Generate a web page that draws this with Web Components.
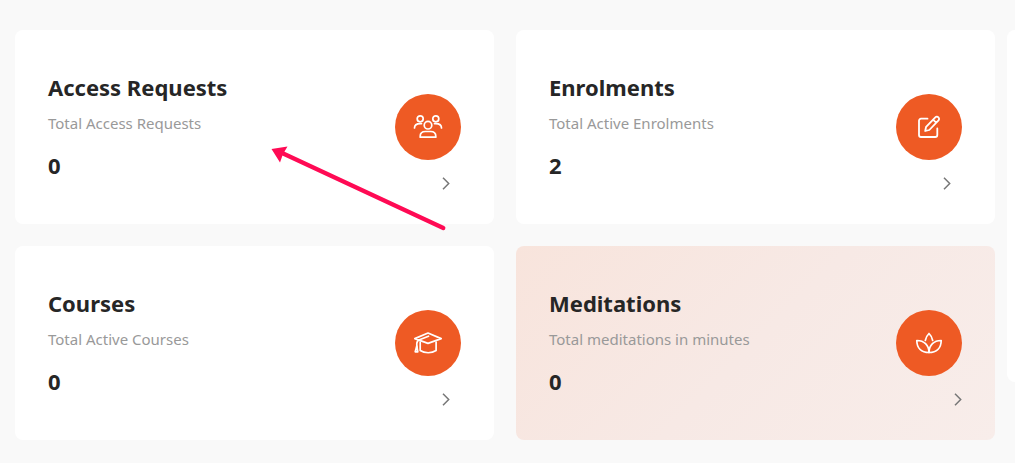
<!DOCTYPE html>
<html lang="en">
<head>
<meta charset="utf-8">
<title>Dashboard</title>
<style>
body { margin: 0; background: #f9f9f9; font-family: "Noto Sans", "Open Sans", sans-serif; }
</style>
</head>
<body>
<dash-board>
  <stat-card heading="Access Requests" caption="Total Access Requests" value="0">
    <svg slot="icon" width="30" height="26" viewBox="0 0 30 26" fill="none" stroke="#fff" stroke-width="1.7" stroke-linecap="round" stroke-linejoin="round">
      <circle cx="7.2" cy="4.8" r="3"/><circle cx="22.8" cy="4.8" r="3"/>
      <path d="M1.5 14c0-3 2.2-4.4 5.700-4.400h1.300M28.500 14c0-3-2.200-4.400-5.700-4.400h-1.300"/>
      <circle cx="15" cy="11.200" r="3.800"/>
      <path d="M7.200 23.200v-1c0-3 2.300-4.700 5.200-4.700h5.200c2.900 0 5.200 1.700 5.200 4.700v1z"/>
    </svg>
  </stat-card>
  <stat-card heading="Enrolments" caption="Total Active Enrolments" value="2">
    <svg slot="icon" width="24" height="24" viewBox="0 0 24 24" fill="none" stroke="#fff" stroke-width="1.8" stroke-linecap="round" stroke-linejoin="round">
      <path d="M10.500 3.700H4a2 2 0 0 0-2 2V20a2 2 0 0 0 2 2h14.300a2 2 0 0 0 2-2v-6.500"/>
      <path d="M8.200 16l.9-4.200L18.300 2.400a2.100 2.100 0 0 1 3.200 3L12.300 15zM16 4.700l3.200 3"/>
    </svg>
  </stat-card>
  <stat-card heading="Courses" caption="Total Active Courses" value="0">
    <svg slot="icon" width="30" height="24" viewBox="0 0 30 24" fill="none" stroke="#fff" stroke-width="1.700" stroke-linecap="round" stroke-linejoin="round">
      <path d="M15 2L1.800 7.600 15 12.400l13.200-4.800z"/>
      <path d="M15.500 5.200L6.500 8.800c-2 .8-2.700 2-2.700 4v4"/>
      <path d="M3.800 15l-1.600 5.800h2.600z"/>
      <path d="M7.200 11v8.500c4.500 3 11.500 3 15.900 0V11"/>
    </svg>
  </stat-card>
  <stat-card class="tinted" heading="Meditations" caption="Total meditations in minutes" value="0">
    <svg slot="icon" width="28" height="22" viewBox="0 0 28 22" fill="none" stroke="#fff" stroke-width="1.700" stroke-linecap="round" stroke-linejoin="round">
      <path d="M10.300 8.500C10.800 5.700 12.200 3.200 14 1.500c1.800 1.700 3.200 4.200 3.700 7"/>
      <path d="M14 20.500C13.900 13 9 8.400 1.800 8.500c0 7.500 4.700 12 12.200 12z"/>
      <path d="M14 20.500c.1-7.500 5-12.100 12.200-12 0 7.500-4.700 12-12.200 12z"/>
    </svg>
  </stat-card>
</dash-board>
<pointer-arrow></pointer-arrow>

<template id="board">
  <style>
    :host { display: flex; align-items: flex-start; gap: 12px; padding: 30px 0 22px 15px; }
    main { flex: 1; min-width: 0; display: grid; grid-template-columns: repeat(2, minmax(0, 1fr)); gap: 22px; }
    aside { flex: 0 0 8px; min-height: 352px; background: #fff; border-radius: 8px 0 0 8px; }
  </style>
  <main><slot></slot></main>
  <aside></aside>
</template>

<template id="card">
  <style>
    :host { display: flex; justify-content: space-between; box-sizing: border-box; min-height: 194px; padding: 0 33px; background: #fff; border-radius: 8px; color: #262626; }
    :host(.tinted) { background: linear-gradient(135deg, #f8e4dc, #f7e9e5 50%, #f8edea); --chevron-inset: 0px; }
    .text { align-self: center; padding-bottom: 3px; }
    h2, p { margin: 0; }
    h2, .value { font-size: 22px; line-height: 30px; font-weight: 700; }
    .caption { margin: 10px 0 16px; font-size: 15px; line-height: 22px; color: #999; }
    .side { display: grid; grid-template-rows: 1fr auto 1fr; }
    .badge { grid-row: 2; display: flex; align-items: center; justify-content: center; width: 66px; height: 66px; border-radius: 50%; background: #ee5a24; }
    button { grid-row: 3; place-self: start end; display: flex; margin: 17px var(--chevron-inset, 11px) 0 0; padding: 0; border: 0; background: none; color: #777; cursor: pointer; }
  </style>
  <div class="text">
    <h2></h2>
    <p class="caption"></p>
    <p class="value"></p>
  </div>
  <div class="side">
    <div class="badge"><slot name="icon"></slot></div>
    <button type="button"><svg width="8" height="13" viewBox="0 0 8 13" fill="none" stroke="currentColor" stroke-width="1.500"><path d="M1 .8l5.700 5.700L1 12.200"/></svg></button>
  </div>
</template>

<template id="arrow">
  <style>
    :host { position: absolute; left: 271px; top: 146px; pointer-events: none; }
    svg { display: block; }
  </style>
  <svg width="176" height="86" viewBox="0 0 176 86" aria-hidden="true">
    <path d="M10 6.500L172.300 82" stroke="#ff0a54" stroke-width="4.200" stroke-linecap="round"/>
    <path d="M.5 3L16.500 .5 12 8 9 16.500z" fill="#ff0a54"/>
  </svg>
</template>

<script>
const stamp = (host, id) => {
  const root = host.attachShadow({ mode: 'open' });
  root.append(document.getElementById(id).content.cloneNode(true));
  return root;
};
customElements.define('dash-board', class extends HTMLElement {
  constructor() { super(); stamp(this, 'board'); }
});
customElements.define('stat-card', class extends HTMLElement {
  connectedCallback() {
    if (this.shadowRoot) return;
    const root = stamp(this, 'card');
    const heading = this.getAttribute('heading');
    root.querySelector('h2').textContent = heading;
    root.querySelector('.caption').textContent = this.getAttribute('caption');
    root.querySelector('.value').textContent = this.getAttribute('value');
    root.querySelector('button').setAttribute('aria-label', 'Open ' + heading);
  }
});
customElements.define('pointer-arrow', class extends HTMLElement {
  constructor() { super(); stamp(this, 'arrow'); }
});
</script>
</body>
</html>
